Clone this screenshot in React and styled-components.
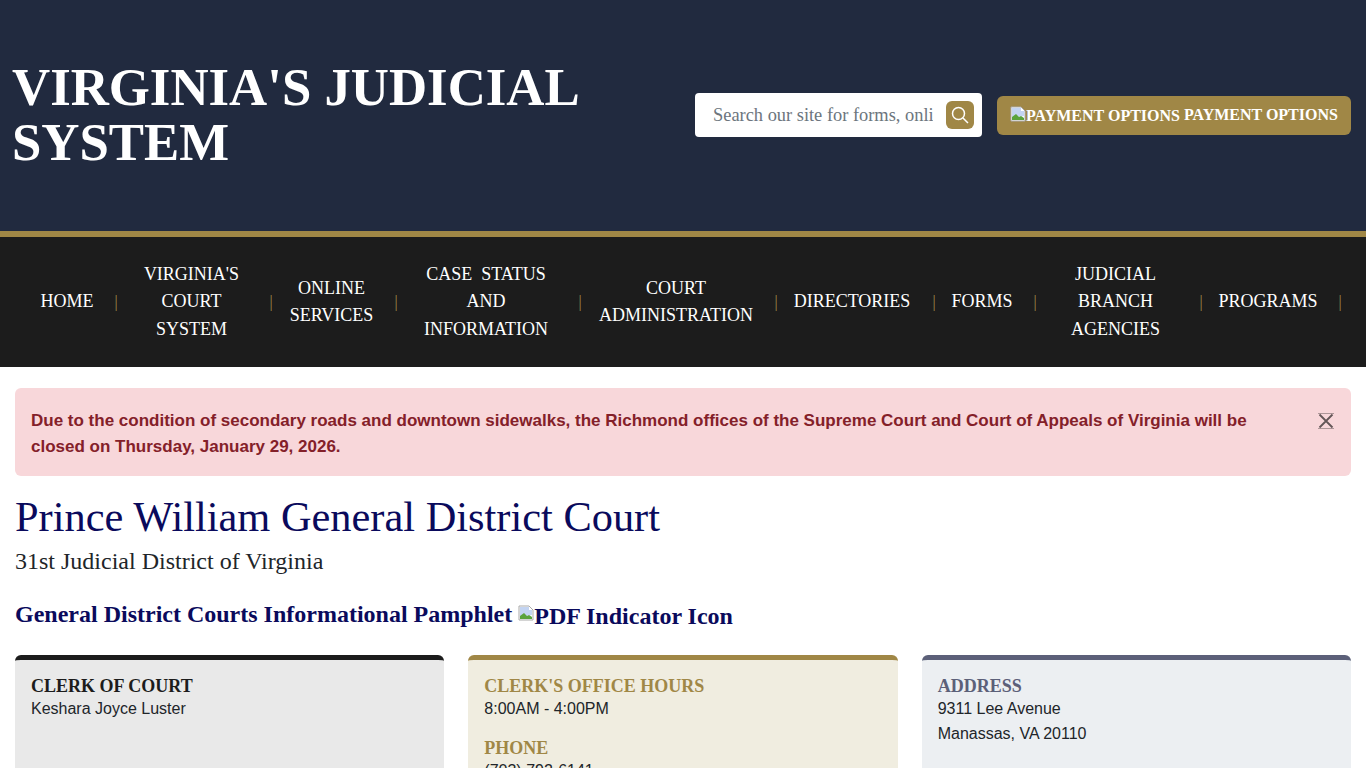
import { Fragment } from 'react'
import styled, { createGlobalStyle } from 'styled-components'

const GlobalStyle = createGlobalStyle`
  html, body {
    margin: 0;
    padding: 0;
    background: #fff;
    font-family: "Liberation Serif", serif;
  }
  * { box-sizing: border-box; }
`;

const Header = styled.header`
  display: flex;
  align-items: center;
  justify-content: space-between;
  height: 237px;
  padding: 0 15px 1px 12px;
  background: #212a3f;
  border-bottom: 6px solid #a08746;
`;

const SiteTitle = styled.h1`
  width: 640px;
  margin: 0;
  color: #fff;
  font-size: 52.8px;
  font-weight: 700;
  line-height: 55px;
`;

const HeaderTools = styled.div`
  display: flex;
  align-items: center;
  gap: 15px;
`;

const SearchBox = styled.div`
  display: flex;
  align-items: center;
  justify-content: space-between;
  width: 287px;
  height: 44px;
  padding: 0 8px 0 18px;
  background: #fff;
  border-radius: 4px;
`;

const SearchInput = styled.input`
  width: 220px;
  padding: 0;
  border: 0;
  outline: 0;
  background: transparent;
  font-family: "Liberation Serif", serif;
  font-size: 18.4px;
  &::placeholder { color: #6c757d; opacity: 1; }
`;

const SearchButton = styled.button`
  display: flex;
  align-items: center;
  justify-content: center;
  width: 28px;
  height: 28px;
  padding: 0;
  border: 0;
  border-radius: 6px;
  background: #a08746;
  color: #fff;
`;

const PayButton = styled.a`
  display: flex;
  align-items: center;
  width: 354px;
  height: 39px;
  padding: 0 13px;
  border-radius: 6px;
  background: #a08746;
  color: #fff;
  font-size: 16px;
  font-weight: 700;
  white-space: nowrap;
`;

const BrokenImage = styled.span`
  display: inline-block;
  margin-top: ${p => p.$mt || 0}px;
  vertical-align: ${p => p.$drop || 0}px;
  white-space: nowrap;
  & svg { vertical-align: ${p => p.$lift || 0}px; }
`;

const Nav = styled.nav`
  display: flex;
  align-items: center;
  height: 130px;
  padding-left: 22px;
  background: #1c1c1c;
`;

const NavItem = styled.a`
  display: block;
  flex: none;
  width: ${p => p.$w}px;
  padding-right: ${p => p.$pr}px;
  color: #fff;
  font-size: 18px;
  line-height: 27.5px;
  text-align: center;
  white-space: pre;
`;

const NavSep = styled.span`
  flex: none;
  width: 4px;
  color: #a08746;
  font-size: 16px;
  text-align: center;
`;

const Main = styled.main`
  padding: 21px 15px 0;
`;

const Alert = styled.div`
  display: flex;
  justify-content: space-between;
  align-items: flex-start;
  height: 88px;
  padding: 20px 16px 0;
  border-radius: 6px;
  background: #f8d7da;
  color: #842029;
  font-family: "Liberation Sans", Arial, sans-serif;
  font-size: 17px;
  font-weight: 700;
  line-height: 26px;
`;

const AlertText = styled.div`
  width: 1240px;
`;

const CloseButton = styled.span`
  display: flex;
  margin-top: 4px;
  color: #000;
`;

const CourtName = styled.h2`
  margin: 19px 0 0;
  color: #0a0a5c;
  font-size: 42.4px;
  font-weight: 400;
  line-height: 44px;
`;

const District = styled.div`
  margin-top: 7px;
  color: #212529;
  font-size: 24px;
  line-height: 30px;
`;

const PamphletLink = styled.a`
  display: block;
  margin-top: 20px;
  color: #0a0a5c;
  font-size: 24px;
  font-weight: 700;
  line-height: 36px;
`;

const Cards = styled.div`
  display: grid;
  grid-template-columns: repeat(3, 1fr);
  gap: 24px;
  margin-top: 21px;
`;

const Card = styled.section`
  height: 300px;
  padding: 16px;
  border-top: 5px solid ${p => p.$accent};
  border-radius: 6px;
  background: ${p => p.$bg};
`;

const CardLabel = styled.div`
  color: ${p => p.$color};
  font-size: 18px;
  font-weight: 700;
  line-height: 20px;
  margin-top: ${p => (p.$spaced ? '17px' : 0)};
`;

const CardLine = styled.div`
  color: #212529;
  font-family: "Liberation Sans", Arial, sans-serif;
  font-size: 16px;
  line-height: 25px;
`;

const navItems = [
  { w: 92, pr: 2, t: 'HOME' },
  { w: 151, pr: 4, t: "VIRGINIA'S\nCOURT\nSYSTEM" },
  { w: 121, pr: 4, t: 'ONLINE\nSERVICES' },
  { w: 180, pr: 4, t: 'CASE  STATUS\nAND\nINFORMATION' },
  { w: 192, pr: 4, t: 'COURT\nADMINISTRATION' },
  { w: 154, pr: 6, t: 'DIRECTORIES' },
  { w: 97, pr: 5, t: 'FORMS' },
  { w: 162, pr: 5, t: 'JUDICIAL\nBRANCH\nAGENCIES' },
  { w: 135, pr: 5, t: 'PROGRAMS' },
];

const ImageIcon = () => (
  <svg width="16" height="16" viewBox="0 0 16 16">
    <path d="M1 1h10l4 4v10H1z" fill="#fff" stroke="#a9a9a9" />
    <path d="M2 2h9v3h3v5L2 12z" fill="#c3d4f2" />
    <path d="M2 14v-3l4-3 3 3 2-1 3 2v2z" fill="#5aa33c" />
  </svg>
);

export default function App() {
  return (
    <>
      <GlobalStyle />
      <Header>
        <SiteTitle>VIRGINIA'S JUDICIAL SYSTEM</SiteTitle>
        <HeaderTools>
          <SearchBox>
            <SearchInput placeholder="Search our site for forms, online services" />
            <SearchButton>
              <svg width="18" height="18" viewBox="0 0 18 18" fill="none" stroke="currentColor" strokeWidth="1.5">
                <circle cx="7.5" cy="7.5" r="6" />
                <path d="M12 12l5 5" />
              </svg>
            </SearchButton>
          </SearchBox>
          <PayButton>
            <BrokenImage $mt={1} $lift={-1}><ImageIcon />PAYMENT OPTIONS</BrokenImage>&nbsp;PAYMENT OPTIONS
          </PayButton>
        </HeaderTools>
      </Header>
      <Nav>
        {navItems.map(item => (
          <Fragment key={item.t}>
            <NavItem $w={item.w} $pr={item.pr}>{item.t}</NavItem>
            <NavSep>|</NavSep>
          </Fragment>
        ))}
      </Nav>
      <Main>
        <Alert>
          <AlertText>
            Due to the condition of secondary roads and downtown sidewalks, the Richmond offices of the Supreme Court and Court of Appeals of Virginia will be closed on Thursday, January 29, 2026.
          </AlertText>
          <CloseButton>
            <svg width="18" height="18" viewBox="0 0 18 18" fill="none" stroke="#000">
              <path d="M2.5 2.5l13 13M15.5 2.5l-13 13" strokeWidth="1.8" opacity="0.6" />
              <path d="M1 1.5h16M1 16.5h16" strokeWidth="1" opacity="0.3" />
            </svg>
          </CloseButton>
        </Alert>
        <CourtName>Prince William General District Court</CourtName>
        <District>31st Judicial District of Virginia</District>
        <PamphletLink>
          General District Courts Informational Pamphlet <BrokenImage $drop={-2} $lift={3}><ImageIcon />PDF Indicator Icon</BrokenImage>
        </PamphletLink>
        <Cards>
          <Card $accent="#1c1c1c" $bg="#e9e9e9">
            <CardLabel $color="#1c1c1c">CLERK OF COURT</CardLabel>
            <CardLine>Keshara Joyce Luster</CardLine>
          </Card>
          <Card $accent="#a08746" $bg="#f0ede0">
            <CardLabel $color="#a08746">CLERK'S OFFICE HOURS</CardLabel>
            <CardLine>8:00AM - 4:00PM</CardLine>
            <CardLabel $color="#a08746" $spaced>PHONE</CardLabel>
            <CardLine>(703) 792-6141</CardLine>
          </Card>
          <Card $accent="#5c6079" $bg="#eceff2">
            <CardLabel $color="#5c6079">ADDRESS</CardLabel>
            <CardLine>9311 Lee Avenue</CardLine>
            <CardLine>Manassas, VA 20110</CardLine>
          </Card>
        </Cards>
      </Main>
    </>
  );
}
